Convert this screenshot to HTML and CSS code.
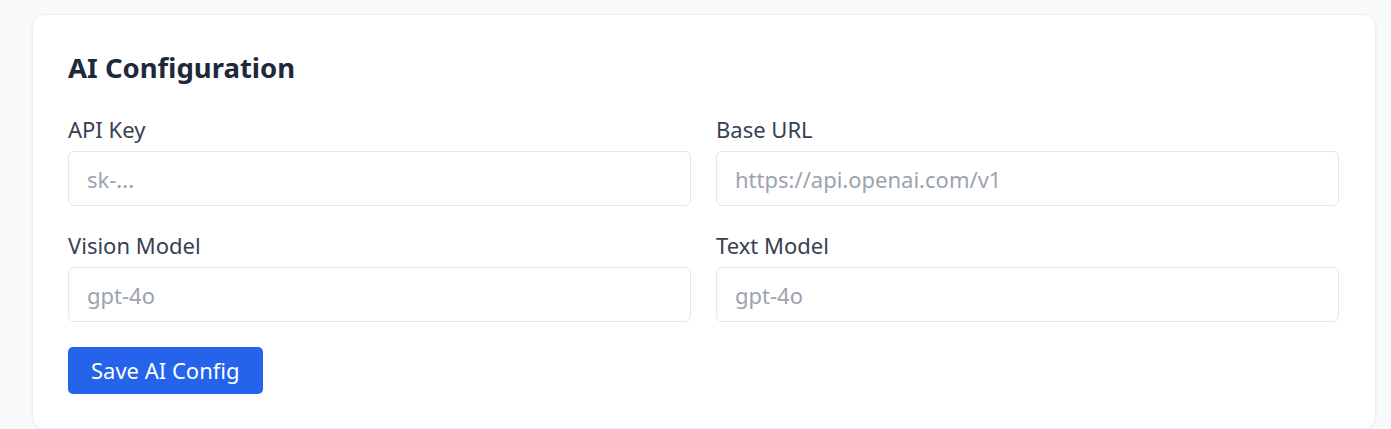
FILE: index.html
```html
<!DOCTYPE html>
<html lang="en">
<head>
<meta charset="utf-8">
<title>AI Configuration</title>
<link rel="stylesheet" href="styles.css">
</head>
<body>
<main class="page">
  <section class="card">
    <h2 class="card-title">AI Configuration</h2>
    <div class="grid">
      <label class="field">
        <span class="field-label">API Key</span>
        <input class="field-input" type="password" placeholder="sk-...">
      </label>
      <label class="field">
        <span class="field-label">Base URL</span>
        <input class="field-input" type="text" placeholder="https://api.openai.com/v1">
      </label>
      <label class="field">
        <span class="field-label">Vision Model</span>
        <input class="field-input" type="text" placeholder="gpt-4o">
      </label>
      <label class="field">
        <span class="field-label">Text Model</span>
        <input class="field-input" type="text" placeholder="gpt-4o">
      </label>
    </div>
    <button class="btn-primary" type="button">Save AI Config</button>
  </section>
</main>
</body>
</html>
```

FILE: styles.css
```css
* { box-sizing: border-box; }
html, body {
  margin: 0;
  padding: 0;
  background: #f8fafc;
  font-family: "Noto Sans", "Open Sans", "Liberation Sans", sans-serif;
}
.page {
  padding: 14px 15px 0 32px;
}
.card {
  background: #ffffff;
  border: 1px solid #eef1f5;
  border-radius: 12px;
  box-shadow: 0 1px 3px rgba(15, 23, 42, 0.06);
  padding: 35px 36px 33px 35px;
  height: 415px;
}
.card-title {
  margin: 0 0 28px;
  font-size: 27.5px;
  line-height: 36px;
  font-weight: 700;
  color: #1e293b;
}
.grid {
  display: grid;
  grid-template-columns: 1fr 1fr;
  column-gap: 25px;
  row-gap: 24px;
  margin-bottom: 25px;
}
.field {
  display: flex;
  flex-direction: column;
  gap: 7px;
}
.field-label {
  font-size: 22px;
  line-height: 30px;
  color: #374151;
}
.field-input {
  height: 55px;
  border: 1px solid #e5e7eb;
  border-radius: 6px;
  padding: 0 18px;
  font-family: inherit;
  font-size: 22px;
  color: #1f2937;
  background: #ffffff;
  outline: none;
}
.field-input::placeholder {
  color: #9ca3af;
}
.btn-primary {
  display: block;
  height: 47px;
  padding: 0 23px;
  border: none;
  border-radius: 5px;
  background: #2563eb;
  color: #ffffff;
  font-family: inherit;
  font-size: 22px;
  line-height: 47px;
}
```
